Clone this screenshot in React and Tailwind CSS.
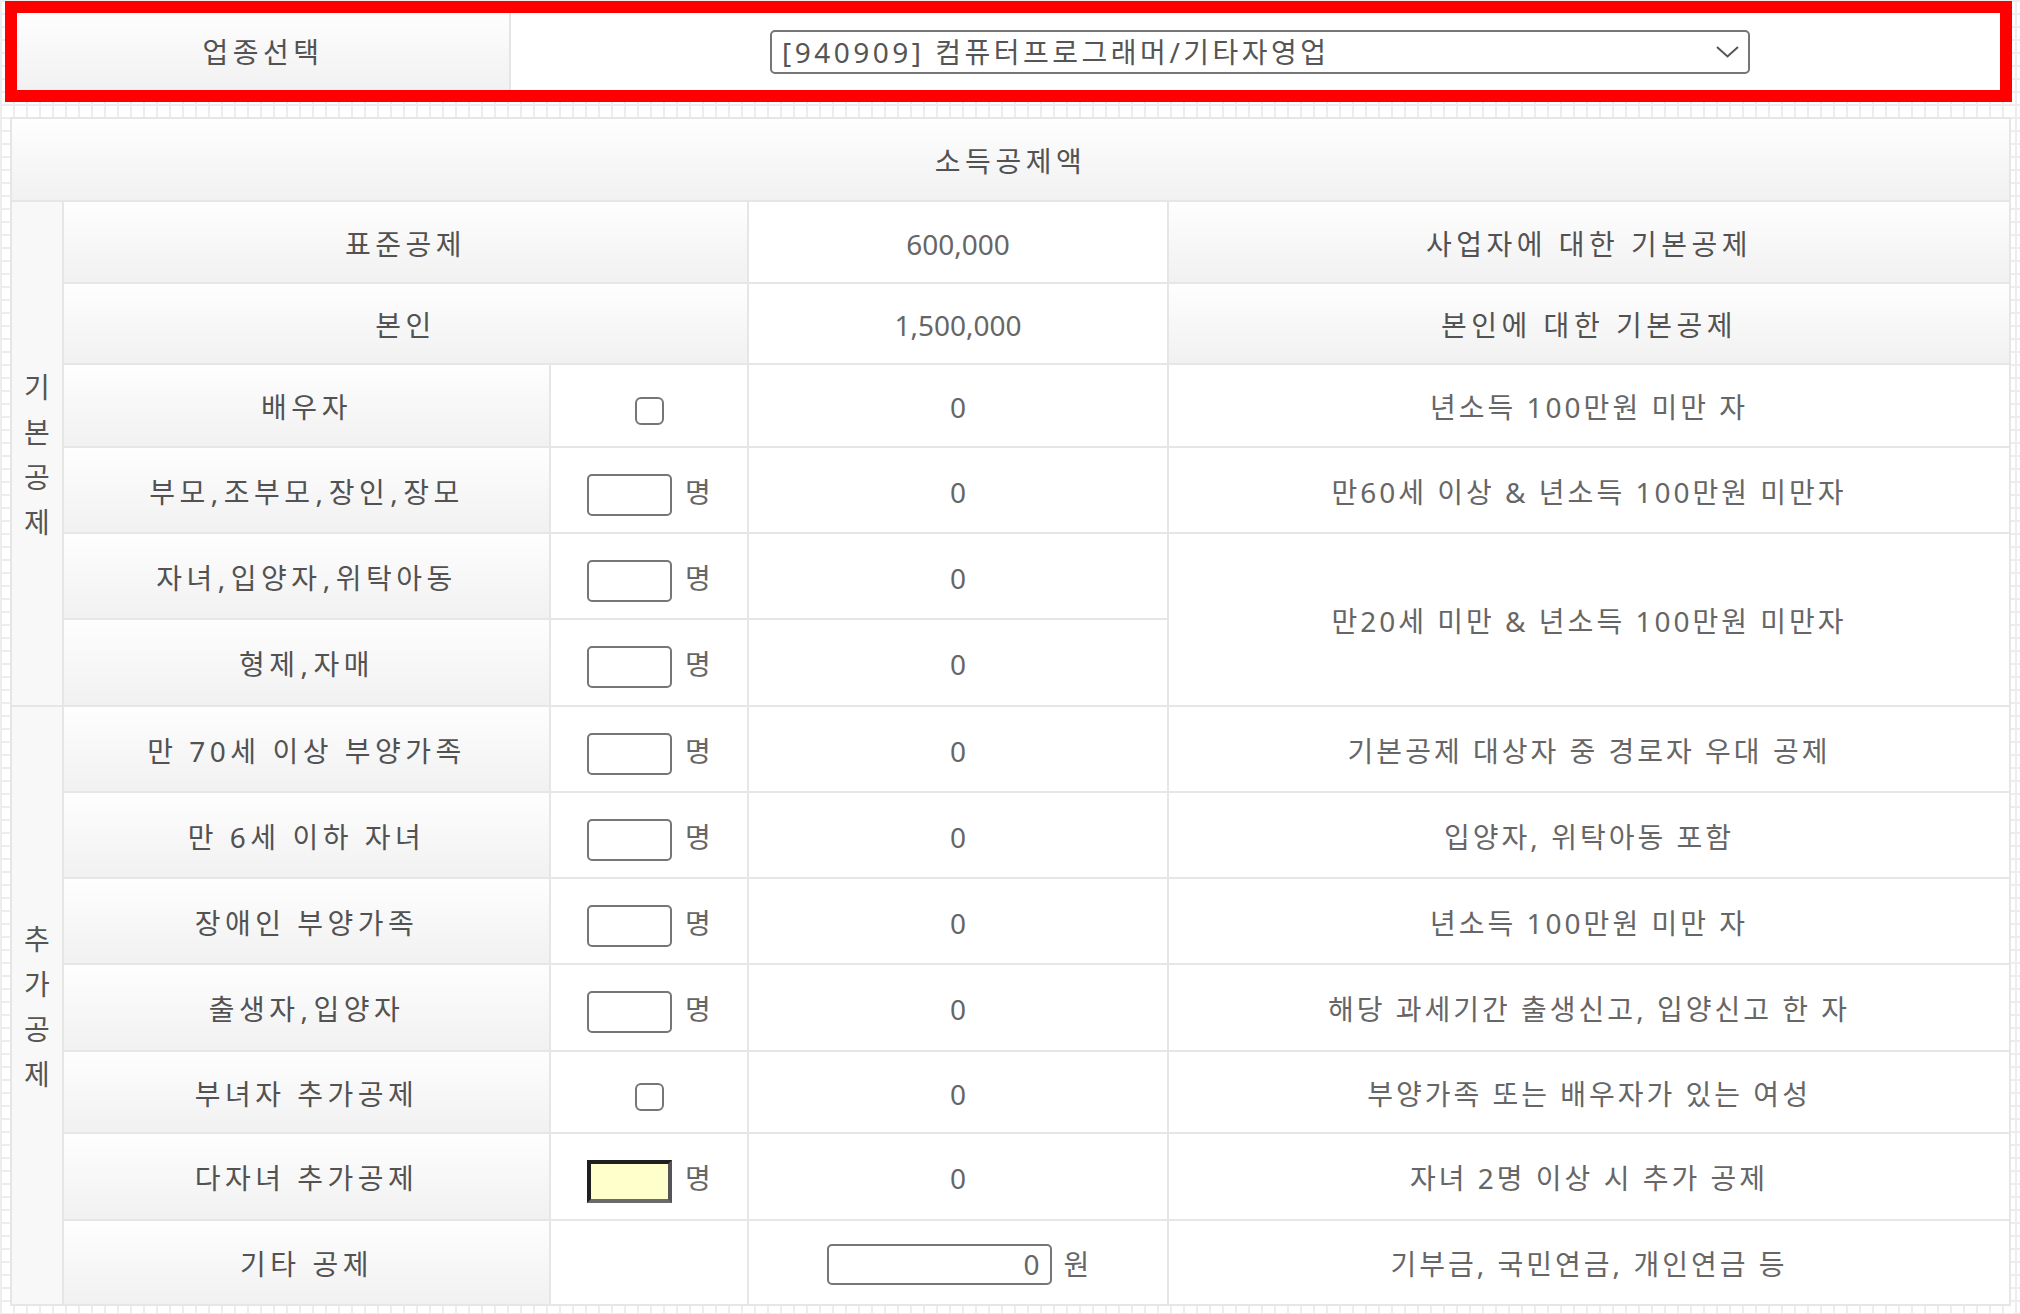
const basic = [
  { label: '배우자', ctrl: 'check', desc: '년소득 100만원 미만 자', h: 83 },
  { label: '부모,조부모,장인,장모', ctrl: 'input', desc: '만60세 이상 & 년소득 100만원 미만자', h: 86 },
  { label: '자녀,입양자,위탁아동', ctrl: 'input', desc: '만20세 미만 & 년소득 100만원 미만자', span: 2, h: 86 },
  { label: '형제,자매', ctrl: 'input', desc: null, h: 87 },
]

const extra = [
  { label: '만 70세 이상 부양가족', ctrl: 'input', desc: '기본공제 대상자 중 경로자 우대 공제', h: 86 },
  { label: '만 6세 이하 자녀', ctrl: 'input', desc: '입양자, 위탁아동 포함', h: 86 },
  { label: '장애인 부양가족', ctrl: 'input', desc: '년소득 100만원 미만 자', h: 86 },
  { label: '출생자,입양자', ctrl: 'input', desc: '해당 과세기간 출생신고, 입양신고 한 자', h: 87 },
  { label: '부녀자 추가공제', ctrl: 'check', desc: '부양가족 또는 배우자가 있는 여성', h: 82 },
  { label: '다자녀 추가공제', ctrl: 'focus', desc: '자녀 2명 이상 시 추가 공제', h: 87 },
  { label: '기타 공제', ctrl: 'none', desc: '기부금, 국민연금, 개인연금 등', h: 85 },
]

const head = 'bg-linear-to-b from-[#fefefe] to-[#f1f1f1] text-[#525252] tracking-[4.5px]'
const cell = 'border-2 border-[#e6e6e6] p-0 pt-[3px] text-center align-middle'

// commas in the labels sit in a slightly wider slot than the font gives them
function Label({ text }) {
  const parts = text.split(',')
  return parts.map((p, i) => (
    <span key={i}>
      {p}
      {i < parts.length - 1 ? <span className="px-px">,</span> : null}
    </span>
  ))
}

function Control({ type }) {
  if (type === 'check') {
    return <span className="inline-block h-[28px] w-[29px] rounded-[6px] border-2 border-[#767676] bg-white align-middle" />
  }
  if (type === 'none') return null
  const box =
    type === 'focus'
      ? 'h-[43px] w-[85px] border-4 border-t-[#1f1f1f] border-l-[#1f1f1f] border-r-[#555] border-b-[#6a6a6a] bg-[#ffffcc]'
      : 'h-[42px] w-[85px] rounded-[5px] border-2 border-[#767676] bg-white'
  return (
    <div className="flex items-center justify-center gap-[13px]">
      <span className={`mt-[6px] block ${box}`} />
      <span className="text-[#666]">명</span>
    </div>
  )
}

function Vertical({ text }) {
  return (
    <div className="flex flex-col items-center leading-[45px] text-[#555]">
      {text.split('').map((ch, i) => (
        <span key={i}>{ch}</span>
      ))}
    </div>
  )
}

function Row({ row, side }) {
  return (
    <tr style={{ height: row.h }}>
      {side}
      <td className={`${cell} ${head}`}>
        <Label text={row.label} />
      </td>
      <td className={`${cell} bg-white`}>
        <Control type={row.ctrl} />
      </td>
      <td className={`${cell} bg-white text-[#666]`}>
        {row.ctrl === 'none' ? (
          <div className="flex items-center justify-center gap-[12px]">
            <span className="flex h-[41px] w-[225px] items-center justify-end rounded-[5px] border-2 border-[#767676] pr-[10px]">
              0
            </span>
            <span>원</span>
          </div>
        ) : (
          '0'
        )}
      </td>
      {row.desc !== null ? (
        <td rowSpan={row.span || 1} className={`${cell} bg-white tracking-[3px] text-[#666]`}>
          {row.desc}
        </td>
      ) : null}
    </tr>
  )
}

export default function App() {
  return (
    <div className="h-[1314px] w-[2020px] overflow-hidden bg-white bg-[linear-gradient(90deg,#ededed_2px,transparent_2px),linear-gradient(#ededed_2px,transparent_2px)] bg-[size:13px_13px] pt-px font-['Noto_Sans','Noto_Sans_CJK_KR',sans-serif] text-[28px]">
      <div className="ml-[5px] flex h-[101px] w-[2007px] border-[12px] border-[#ff0000] bg-white">
        <div className={`flex w-[494px] items-center justify-center border-r-2 border-[#e5e5e5] ${head}`}>업종선택</div>
        <div className="flex flex-1 items-center justify-center pl-[9px]">
          <div className="flex h-[44px] w-[980px] items-center justify-between rounded-[5px] border-2 border-[#767676] pl-[10px] pr-[8px] tracking-[3.5px] text-[#555]">
            <span>[940909] 컴퓨터프로그래머/기타자영업</span>
            <svg width="25" height="15" viewBox="0 0 25 15">
              <path d="M2 3 12.5 12.5 23 3" fill="none" stroke="#555" strokeWidth="2" />
            </svg>
          </div>
        </div>
      </div>

      <table className="ml-[10px] mt-[15px] w-[1999px] table-fixed border-collapse">
        <colgroup>
          <col className="w-[52px]" />
          <col className="w-[487px]" />
          <col className="w-[198px]" />
          <col className="w-[420px]" />
          <col className="w-[842px]" />
        </colgroup>
        <tbody>
          <tr className="h-[83px]">
            <td colSpan={5} className={`${cell} ${head}`}>
              소득공제액
            </td>
          </tr>
          <tr className="h-[82px]">
            <td rowSpan={6} className={`${cell} bg-[#f8f8f8]`}>
              <Vertical text="기본공제" />
            </td>
            <td colSpan={2} className={`${cell} ${head}`}>
              표준공제
            </td>
            <td className={`${cell} bg-white text-[#666]`}>600,000</td>
            <td className={`${cell} ${head} tracking-[3px]`}>사업자에 대한 기본공제</td>
          </tr>
          <tr className="h-[81px]">
            <td colSpan={2} className={`${cell} ${head}`}>
              본인
            </td>
            <td className={`${cell} bg-white text-[#666]`}>1,500,000</td>
            <td className={`${cell} ${head} tracking-[3px]`}>본인에 대한 기본공제</td>
          </tr>
          {basic.map((row) => (
            <Row key={row.label} row={row} side={null} />
          ))}
          {extra.map((row, i) => (
            <Row
              key={row.label}
              row={row}
              side={
                i === 0 ? (
                  <td rowSpan={7} className={`${cell} bg-[#f8f8f8]`}>
                    <Vertical text="추가공제" />
                  </td>
                ) : null
              }
            />
          ))}
        </tbody>
      </table>
    </div>
  )
}
